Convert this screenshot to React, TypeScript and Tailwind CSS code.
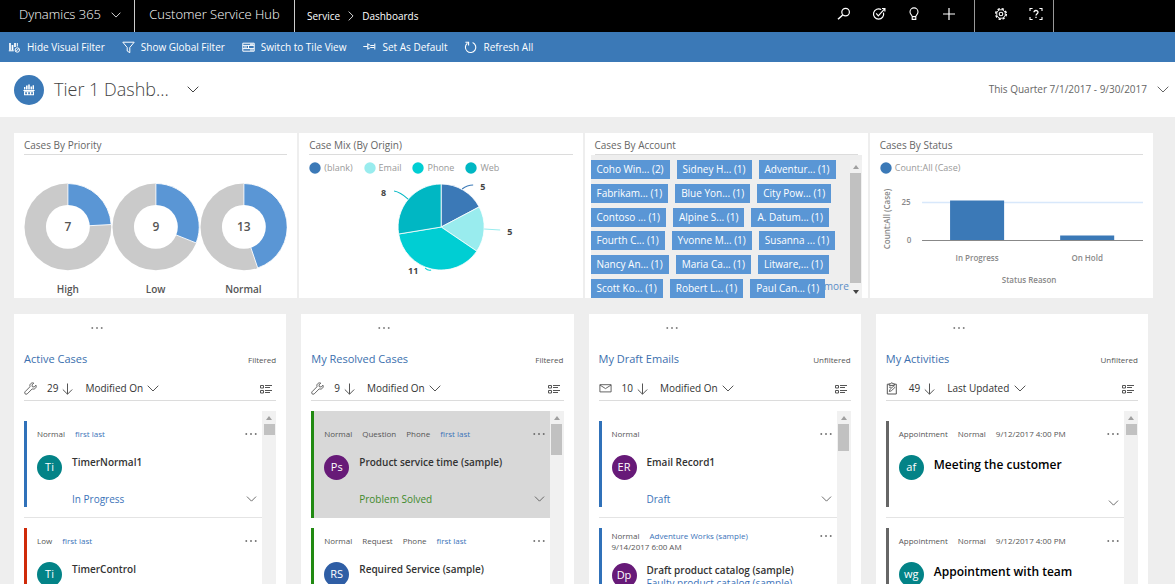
import React from 'react';
import clsx from 'clsx';

type IconProps = { className?: string };

function Chevron({ className }: IconProps) {
  return (
    <svg viewBox="0 0 12 7" className={clsx('shrink-0', className)} fill="none" stroke="currentColor" aria-hidden="true">
      <path d="M0.7 0.7 L6 6 L11.3 0.7" />
    </svg>
  );
}

function Dots({ className }: IconProps) {
  return (
    <svg viewBox="0 0 12 2" className={clsx('h-[2px] w-3 shrink-0', className)} fill="currentColor" aria-hidden="true">
      <path d="M0.5 0.2h1.6v1.6H.5zM5.2.2h1.6v1.6H5.2zM9.9.2h1.6v1.6H9.9z" />
    </svg>
  );
}

function SearchIcon() {
  return (
    <svg viewBox="0 0 14 14" className="h-[14px] w-[14px]" fill="none" stroke="currentColor" strokeWidth="1.2" aria-hidden="true">
      <circle cx="8.6" cy="5.1" r="3.800" />
      <path d="M5.7 8 L1 12.2" strokeWidth="1.5" />
    </svg>
  );
}

function TaskIcon() {
  return (
    <svg viewBox="0 0 14 14" className="h-[14px] w-[14px]" fill="none" stroke="currentColor" strokeWidth="1.2" aria-hidden="true">
      <path d="M9.2 2.6 A5.100 5.100 0 1 0 11.5 5.6" />
      <path d="M4.2 6.4 L6.3 8.8 L12.6 1.800 M10 1.500h2.900v2.900" />
    </svg>
  );
}

function BulbIcon() {
  return (
    <svg viewBox="0 0 14 14" className="h-[14px] w-[14px]" fill="none" stroke="currentColor" strokeWidth="1.1" aria-hidden="true">
      <path d="M5.2 9.6 C5.2 8 3 7.4 3 4.9 A4 4 0 0 1 11 4.9 C11 7.4 8.8 8 8.8 9.6 Z M5.2 9.6 V12.4 H8.8 V9.6" />
    </svg>
  );
}

function PlusIcon() {
  return (
    <svg viewBox="0 0 14 14" className="h-[14px] w-[14px]" stroke="currentColor" strokeWidth="1.2" aria-hidden="true">
      <path d="M7 1v12M1 7h12" />
    </svg>
  );
}

function GearIcon() {
  return (
    <svg viewBox="0 0 14 14" className="h-[14px] w-[14px]" fill="none" stroke="currentColor" aria-hidden="true">
      <circle cx="7" cy="7" r="5.3" strokeWidth="1.5" strokeDasharray="2.3 1.86" />
      <circle cx="7" cy="7" r="4.3" strokeWidth="0.9" />
      <circle cx="7" cy="7" r="1.8" strokeWidth="1.1" />
    </svg>
  );
}

function HelpIcon() {
  return (
    <svg viewBox="0 0 14 14" className="h-[14px] w-[14px]" fill="none" stroke="currentColor" strokeWidth="1.1" aria-hidden="true">
      <path d="M1 4V1.5h2.6M10.4 1.5H13V4M13 10v2.5h-2.6M3.6 12.5H1V10" />
      <path d="M5 5.3 C5 2.9 9 2.9 9 5.2 C9 6.8 7 6.7 7 8.6 M7 9.8v1.3" strokeWidth="1.3" />
    </svg>
  );
}

function VisualFilterIcon() {
  return (
    <svg viewBox="0 0 13 13" className="h-[13px] w-[13px]" fill="none" stroke="currentColor" aria-hidden="true">
      <path d="M2 2v7.500M4.500 4v5.500M7 2v4" strokeWidth="1.700" />
      <path d="M0.800 9.800h5M9.300 2v3.500" />
      <circle cx="9.3" cy="9" r="2.2" />
      <path d="M7.8 10.5l3-3" />
    </svg>
  );
}

function FunnelIcon() {
  return (
    <svg viewBox="0 0 13 13" className="h-[13px] w-[13px]" fill="none" stroke="currentColor" aria-hidden="true">
      <path d="M0.8 1.2h11.4L7.8 6.5v5.2L5.2 10V6.5Z" />
    </svg>
  );
}

function TileIcon() {
  return (
    <svg viewBox="0 0 13 13" className="h-[13px] w-[13px]" fill="none" stroke="currentColor" aria-hidden="true">
      <path d="M0.8 2.2h11.4v8H.8zM.8 4.4h11.4M.8 7.6h11.4M6.5 4.4v3.2" />
      <path d="M2 6h3M8 9h3.4M8 3.3h3.4" strokeWidth="1.1" />
    </svg>
  );
}

function PinIcon() {
  return (
    <svg viewBox="0 0 13 13" className="h-[13px] w-[13px]" fill="none" stroke="currentColor" aria-hidden="true">
      <path d="M0.3 5.500H4.5M4.800 2.300v6.400M4.8 3.700h1.600l1 .8h4M4.8 7.300h1.600l1-.8h4M11.800 2.500v6" />
    </svg>
  );
}

function RefreshIcon() {
  return (
    <svg viewBox="0 0 13 13" className="h-[13px] w-[13px]" fill="none" stroke="currentColor" strokeWidth="1.1" aria-hidden="true">
      <path d="M8.6 1.5 A5.2 5.2 0 1 1 3.4 2.2 M1.4 1.3 H4.6 V4.5" />
    </svg>
  );
}

function DashboardIcon() {
  return (
    <svg viewBox="0 0 12 12" className="h-3 w-3" fill="currentColor" aria-hidden="true">
      <path d="M1 3h1.4v2.4H1zM3 1.6h1.6v3.8H3zM5.2.6h1.6v4.8H5.2zM7.5 2.4h1.6v3H7.500zM9.600 1.200H11v4.200H9.600zM0.400 6h11.200v.9H.4z" />
      <path fillRule="evenodd" d="M1 7.300h10v4H1zM2.200 8.300v2h1.700v-2zM5.200 8.300v2h1.700v-2zM8.200 8.300v2h1.700v-2z" />
    </svg>
  );
}

function WrenchIcon() {
  return (
    <svg viewBox="0 0 13 13" className="h-[13px] w-[13px]" fill="none" stroke="currentColor" strokeWidth="0.9" aria-hidden="true">
      <path d="M12 3.200 L10.100 5 L8.300 4.700 L8 2.900 L9.800 1.100 C7.500.2 5.200 2.200 6 4.700 L1 9.800 C-.2 11.200 1.700 13.100 3.200 11.900 L8.200 6.900 C10.800 7.800 12.900 5.500 12 3.200 Z" />
    </svg>
  );
}

function MailIcon() {
  return (
    <svg viewBox="0 0 13 13" className="h-[13px] w-[13px]" fill="none" stroke="currentColor" strokeWidth="0.9" aria-hidden="true">
      <path d="M0.900 2.700h11.200v7.200H.9zM.9 3l5.600 3.600L12.100 3" />
    </svg>
  );
}

function ClipboardIcon() {
  return (
    <svg viewBox="0 0 13 13" className="h-[13px] w-[13px]" fill="none" stroke="currentColor" strokeWidth="1" aria-hidden="true">
      <path d="M3.200 2.200H1.300v9.800h9V2.200H8.400M3.200 1.800h1.500c.3-1.400 1.900-1.400 2.200 0h1.500v1.600H3.200z" />
      <path d="M3.300 9.500l.6-2 3.600-3.300 1.300 1.400-3.600 3.300zM3 5.200h2.300" strokeWidth="0.9" />
    </svg>
  );
}

function ArrowDown() {
  return (
    <svg viewBox="0 0 11 12" className="h-3 w-[11px]" fill="none" stroke="currentColor" aria-hidden="true">
      <path d="M5.500 0.500v10.700M0.800 6.500l4.700 4.700 4.700-4.700" />
    </svg>
  );
}

function ViewIcon() {
  return (
    <svg viewBox="0 0 12 10" className="h-[10px] w-3" fill="none" stroke="currentColor" aria-hidden="true">
      <path d="M0.500 1.500h3v2.500h-3zM.5 6.500h3V9h-3zM5 1.500h7M5 3.500h5M5 6.500h7M5 8.500h5" />
    </svg>
  );
}

/* Charts */

function wedge(cx: number, cy: number, r: number, from: number, to: number) {
  const point = (t: number) => {
    const a = t * Math.PI * 2;
    return `${(cx + r * Math.sin(a)).toFixed(2)} ${(cy - r * Math.cos(a)).toFixed(2)}`;
  };
  return `M${cx} ${cy} L${point(from)} A${r} ${r} 0 ${to - from > 0.5 ? 1 : 0} 1 ${point(to)} Z`;
}

function ChartCard({ title, children }: { title: string; children: React.ReactNode }) {
  return (
    <section className="flex h-[165px] flex-col overflow-hidden bg-white px-[10px] pt-1">
      <h2 className="h-[18px] shrink-0 border-b border-[#dcdcdc] text-[10px] leading-4 text-[#666]">{title}</h2>
      {children}
    </section>
  );
}

function Donut({ value, total, label }: { value: number; total: number; label: string }) {
  return (
    <figure className="flex flex-col items-center">
      <svg viewBox="0 0 88 88" className="w-full">
        <circle cx="44" cy="44" r="43.500" fill="#cacaca" />
        <path d={wedge(44, 44, 43.5, 0, value / total)} fill="#5a96d5" stroke="#fff" strokeWidth="0.9" />
        <circle cx="44" cy="44" r="22" fill="#fff" />
        <text x="44" y="48" textAnchor="middle" fontSize="12" fontWeight="600" fill="#555">{value}</text>
      </svg>
      <figcaption className="mt-2 text-[10px] leading-5 font-semibold text-[#555]">{label}</figcaption>
    </figure>
  );
}

const priorities = [
  { label: 'High', value: 7 },
  { label: 'Low', value: 9 },
  { label: 'Normal', value: 13 },
];

const origins = [
  { label: '(blank)', value: 5, color: '#3b79b7' },
  { label: 'Email', value: 5, color: '#99ecee' },
  { label: 'Phone', value: 11, color: '#00ced3' },
  { label: 'Web', value: 8, color: '#00b7c3' },
];

function OriginPie() {
  let start = 0;
  return (
    <>
      <ul className="flex gap-[11px] pt-[7px] text-[9px] leading-3 text-[#999]">
        {origins.map((o) => (
          <li key={o.label} className="flex items-center gap-[3px]">
            <svg viewBox="0 0 12 12" className="h-3 w-3"><circle cx="6" cy="6" r="5.700" fill={o.color} /></svg>
            {o.label}
          </li>
        ))}
      </ul>
      <svg viewBox="0 0 263 112" className="w-full" fontSize="9" fontWeight="700" fill="#444">
        {origins.map((o) => {
          const from = start;
          start += o.value / 29;
          return <path key={o.label} d={wedge(132, 53, 43, from, start)} fill={o.color} stroke="#fff" strokeWidth="0.8" />;
        })}
        <g fill="none" strokeWidth="1">
          <path d="M153 15 Q158 11 164 11" stroke="#3b79b7" />
          <path d="M175 55 L191 56" stroke="#99ecee" />
          <path d="M116 94 Q119 97 122 96" stroke="#00ced3" />
          <path d="M85 17 Q91 18 99 25" stroke="#00b7c3" />
        </g>
        <text x="171" y="16">5</text>
        <text x="198" y="61">5</text>
        <text x="99" y="100">11</text>
        <text x="72" y="22">8</text>
      </svg>
    </>
  );
}

const accounts = [
  ['Coho Win... (2)', 'Sidney H... (1)', 'Adventur... (1)'],
  ['Fabrikam... (1)', 'Blue Yon... (1)', 'City Pow... (1)'],
  ['Contoso ... (1)', 'Alpine S... (1)', 'A. Datum... (1)'],
  ['Fourth C... (1)', 'Yvonne M... (1)', 'Susanna ... (1)'],
  ['Nancy An... (1)', 'Maria Ca... (1)', 'Litware,... (1)'],
  ['Scott Ko... (1)', 'Robert L... (1)', 'Paul Can... (1)'],
];

function AccountTags() {
  return (
    <div className="relative -mx-1 flex min-h-0 flex-1 bg-[#eee] pt-[5px]">
      <a href="#more" className="absolute right-[13px] bottom-1 text-[10px] leading-4 text-[#5a8cc6]">more</a>
      <div className="relative flex flex-1 flex-col justify-between">
        {accounts.map((row) => (
          <div key={row[0]} className="flex gap-[7px]">
            {row.map((name) => (
              <button key={name} type="button" className="h-[19px] bg-[#5a96d5] px-[6px] text-[10px] leading-[19px] whitespace-nowrap text-white">
                {name}
              </button>
            ))}
          </div>
        ))}
      </div>
      <div className="flex w-3 flex-col items-center bg-[#f1f1f1] pt-[5px] pb-1">
        <svg viewBox="0 0 6 4" className="h-1 w-[6px]" fill="#a0a0a0"><path d="M0 4L3 0L6 4z" /></svg>
        <div className="mt-1 mb-[7px] w-[11px] flex-1 bg-[#c1c1c1]" />
        <svg viewBox="0 0 6 4" className="h-1 w-[6px]" fill="#444"><path d="M0 0L3 4L6 0z" /></svg>
      </div>
    </div>
  );
}

function StatusBars() {
  return (
    <>
      <div className="flex items-center gap-[3px] pt-[7px] text-[9px] leading-3 text-[#999]">
        <svg viewBox="0 0 12 12" className="h-3 w-3"><circle cx="6" cy="6" r="5.700" fill="#3b79b7" /></svg>
        Count:All (Case)
      </div>
      <svg viewBox="0 0 263 112" className="w-full" fontSize="8" fontWeight="600" fill="#888" textAnchor="middle">
        <text x="6" y="45" dominantBaseline="central" transform="rotate(-90 6 45)">Count:All (Case)</text>
        <text x="26" y="31">25</text>
        <text x="29" y="69">0</text>
        <path d="M42 28.500H263" stroke="#d8e8fb" strokeWidth="1.500" />
        <path d="M70 26.500h54v39.500H70zM180 61.500h54v4.500H180z" fill="#3b79b7" />
        <path d="M42 66.500H263" stroke="#888" />
        <text x="97" y="87">In Progress</text>
        <text x="207" y="87">On Hold</text>
        <text x="149" y="109">Status Reason</text>
      </svg>
    </>
  );
}

/* Streams */

interface StreamItem {
  meta: string[];
  link?: string;
  date?: string;
  initials: string;
  avatar: string;
  bar: string;
  title: string;
  status?: string;
  statusColor?: string;
  subject?: string;
  large?: boolean;
  selected?: boolean;
}

interface Stream {
  title: string;
  filter: string;
  count: number;
  sort: string;
  icon: React.ReactNode;
  thumb: string;
  items: StreamItem[];
}

const streams: Stream[] = [
  {
    title: 'Active Cases', filter: 'Filtered', count: 29, sort: 'Modified On', icon: <WrenchIcon />, thumb: 'h-[11px]',
    items: [
      { meta: ['Normal'], link: 'first last', initials: 'Ti', avatar: 'bg-[#038387]', bar: 'border-[#3071b9]', title: 'TimerNormal1', status: 'In Progress' },
      { meta: ['Low'], link: 'first last', initials: 'Ti', avatar: 'bg-[#038387]', bar: 'border-[#cf2a09]', title: 'TimerControl' },
    ],
  },
  {
    title: 'My Resolved Cases', filter: 'Filtered', count: 9, sort: 'Modified On', icon: <WrenchIcon />, thumb: 'h-[31px]',
    items: [
      { meta: ['Normal', 'Question', 'Phone'], link: 'first last', initials: 'Ps', avatar: 'bg-[#671a78]', bar: 'border-[#218a12]', title: 'Product service time (sample)', status: 'Problem Solved', statusColor: 'text-[#3f8a2b]', selected: true },
      { meta: ['Normal', 'Request', 'Phone'], link: 'first last', initials: 'RS', avatar: 'bg-[#2f5ea5]', bar: 'border-[#218a12]', title: 'Required Service (sample)' },
    ],
  },
  {
    title: 'My Draft Emails', filter: 'Unfiltered', count: 10, sort: 'Modified On', icon: <MailIcon />, thumb: 'h-[27px]',
    items: [
      { meta: ['Normal'], initials: 'ER', avatar: 'bg-[#671a78]', bar: 'border-[#3071b9]', title: 'Email Record1', status: 'Draft' },
      { meta: ['Normal'], link: 'Adventure Works (sample)', date: '9/14/2017 6:00 AM', initials: 'Dp', avatar: 'bg-[#671a78]', bar: 'border-[#3071b9]', title: 'Draft product catalog (sample)', subject: 'Faulty product catalog (sample)' },
    ],
  },
  {
    title: 'My Activities', filter: 'Unfiltered', count: 49, sort: 'Last Updated', icon: <ClipboardIcon />, thumb: 'h-[11px]',
    items: [
      { meta: ['Appointment', 'Normal', '9/12/2017 4:00 PM'], initials: 'af', avatar: 'bg-[#038387]', bar: 'border-[#666]', title: 'Meeting the customer', large: true },
      { meta: ['Appointment', 'Normal', '9/12/2017 4:00 PM'], initials: 'wg', avatar: 'bg-[#038387]', bar: 'border-[#666]', title: 'Appointment with team', large: true },
    ],
  },
];

function StreamCard({ item }: { item: StreamItem }) {
  return (
    <li className={clsx('shrink-0', item.selected ? 'bg-[#d8d8d8]' : 'border-b border-[#e4e4e4] py-[10px]')}>
      <article className={clsx('flex flex-col border-l-[3px] pr-[5px] pl-[10px]', item.bar, item.selected ? 'h-[107px] pt-[10px] pb-3' : 'h-[86px] pb-px')}>
        <div className={clsx('flex items-start justify-between', item.date ? 'pt-[2px]' : 'pt-[7px]')}>
          <div className="text-[8px] leading-[11px] text-[#555]">
            <div className="flex gap-[10px]">
              {item.meta.map((m) => <span key={m}>{m}</span>)}
              {item.link && <a href="#record" className="text-[#3b73b9]">{item.link}</a>}
            </div>
            {item.date && <div>{item.date}</div>}
          </div>
          <button type="button" aria-label="More commands" className="flex h-[11px] items-center text-[#555]"><Dots /></button>
        </div>
        <div className={clsx('flex flex-1 gap-[10px]', item.date ? 'pt-[11px]' : 'pt-4')}>
          <div className={clsx('flex h-[25px] w-[25px] shrink-0 items-center justify-center rounded-full text-[11px] text-white', item.avatar)}>{item.initials}</div>
          <div className="flex min-w-0 flex-1 flex-col">
            <h4 className={clsx('font-semibold whitespace-nowrap', item.large ? 'text-[12px] leading-5 text-black' : 'text-[10px] leading-[14px] text-[#333]')}>{item.title}</h4>
            {item.subject && <a href="#case" className="text-[10px] leading-3 whitespace-nowrap text-[#3b73b9]">{item.subject}</a>}
            <div className="mt-auto flex items-center justify-between">
              <span className={clsx('text-[10px] leading-[14px]', item.statusColor ?? 'text-[#3b73b9]')}>{item.status}</span>
              <button type="button" aria-label="Expand"><Chevron className="h-[6px] w-[11px] text-[#555]" /></button>
            </div>
          </div>
        </div>
      </article>
    </li>
  );
}

function StreamColumn({ stream }: { stream: Stream }) {
  return (
    <section className="flex min-h-0 flex-col overflow-hidden bg-white px-[10px]">
      <button type="button" aria-label="More" className="flex h-7 w-[146px] shrink-0 items-center justify-center text-[#666]"><Dots /></button>
      <header className="flex h-[35px] shrink-0 items-center justify-between">
        <h3 className="text-[11px] text-[#3b6fae]">{stream.title}</h3>
        <span className="text-[8px] text-[#555]">{stream.filter}</span>
      </header>
      <div className="flex h-6 shrink-0 items-center border-b border-[#dcdcdc] text-[10px] text-[#333]">
        <span className="text-[#555]">{stream.icon}</span>
        <span className="mr-1 ml-[10px]">{stream.count}</span>
        <button type="button" aria-label="Sort direction" className="text-[#555]"><ArrowDown /></button>
        <select aria-label="Sort by" className="mr-1 ml-3 appearance-none bg-transparent">
          <option>{stream.sort}</option>
        </select>
        <Chevron className="h-[7px] w-3 text-[#555]" />
        <button type="button" aria-label="Select view" className="mr-1 ml-auto text-[#555]"><ViewIcon /></button>
      </div>
      <div className="mt-[10px] flex min-h-0 flex-1">
        <ul className="flex min-w-0 flex-1 flex-col overflow-hidden">
          {stream.items.map((item) => <StreamCard key={item.title} item={item} />)}
        </ul>
        <div className="flex w-[14px] flex-col items-center bg-[#f1f1f1] pt-[5px]">
          <svg viewBox="0 0 6 4" className="h-1 w-[6px]" fill="#a0a0a0"><path d="M0 4L3 0L6 4z" /></svg>
          <div className={clsx('mt-1 w-[11px] bg-[#c1c1c1]', stream.thumb)} />
        </div>
      </div>
    </section>
  );
}

const commands = [
  { label: 'Hide Visual Filter', icon: <VisualFilterIcon /> },
  { label: 'Show Global Filter', icon: <FunnelIcon /> },
  { label: 'Switch to Tile View', icon: <TileIcon /> },
  { label: 'Set As Default', icon: <PinIcon /> },
  { label: 'Refresh All', icon: <RefreshIcon /> },
];

export default function App() {
  return (
    <div className="flex h-screen flex-col overflow-hidden border-b-[3px] border-white bg-[#eee] font-['Open_Sans',sans-serif]">
      <header className="flex h-8 shrink-0 bg-black text-white">
        <button type="button" className="flex w-[134px] items-center gap-[10px] pb-[2px] pl-[19px] text-[13px] font-light">
          Dynamics 365
          <Chevron className="h-[6px] w-[10px]" />
        </button>
        <div className="flex w-[161px] items-center justify-center border-x border-[#ccc] pb-[2px] text-[13px] font-light">Customer Service Hub</div>
        <nav aria-label="Breadcrumb" className="flex items-center gap-[6px] pl-3 text-[10px]">
          <a href="#service">Service</a>
          <Chevron className="h-[6px] w-[10px] -rotate-90" />
          <a href="#dashboards">Dashboards</a>
        </nav>
        <div className="mr-[121px] ml-auto flex">
          <div className="flex items-center gap-[21px] pr-[18px] pb-1">
            <button type="button" aria-label="Search"><SearchIcon /></button>
            <button type="button" aria-label="Tasks"><TaskIcon /></button>
            <button type="button" aria-label="Insights"><BulbIcon /></button>
            <button type="button" aria-label="New"><PlusIcon /></button>
          </div>
          <div className="flex items-center gap-[21px] border-x border-[#999] pr-[10px] pb-1 pl-[19px]">
            <button type="button" aria-label="Settings"><GearIcon /></button>
            <button type="button" aria-label="Help"><HelpIcon /></button>
          </div>
        </div>
      </header>

      <div className="flex h-[30px] shrink-0 items-center gap-[17px] bg-[#3b79b7] pl-2 text-[10px] text-white">
        {commands.map((c) => (
          <button key={c.label} type="button" className="flex items-center gap-[6px]">
            {c.icon}
            {c.label}
          </button>
        ))}
      </div>

      <div className="flex h-[55px] shrink-0 items-center bg-white pr-[6px] pl-[14px]">
        <span className="flex h-[30px] w-[30px] items-center justify-center rounded-full bg-[#3b79b7] text-white"><DashboardIcon /></span>
        <button type="button" className="ml-[10px] flex items-center gap-[18px] text-[#444]">
          <h1 className="text-[18px] font-light">Tier 1 Dashb...</h1>
          <Chevron className="h-[7px] w-3" />
        </button>
        <button type="button" className="ml-auto flex items-center gap-[10px] text-[10px] text-[#666]">
          This Quarter 7/1/2017 - 9/30/2017
          <Chevron className="h-[7px] w-3" />
        </button>
      </div>

      <main className="flex min-h-0 flex-1 flex-col gap-4 pt-4 pl-[14px]">
        <div className="mr-[22px] grid shrink-0 grid-cols-4 gap-[2px]">
          <ChartCard title="Cases By Priority">
            <div className="grid grid-cols-3 pt-7">
              {priorities.map((p) => <Donut key={p.label} label={p.label} value={p.value} total={29} />)}
            </div>
          </ChartCard>
          <ChartCard title="Case Mix (By Origin)"><OriginPie /></ChartCard>
          <ChartCard title="Cases By Account"><AccountTags /></ChartCard>
          <ChartCard title="Cases By Status"><StatusBars /></ChartCard>
        </div>
        <div className="mr-[27px] grid min-h-0 flex-1 grid-cols-4 grid-rows-1 gap-[15px]">
          {streams.map((s) => <StreamColumn key={s.title} stream={s} />)}
        </div>
      </main>
    </div>
  );
}
